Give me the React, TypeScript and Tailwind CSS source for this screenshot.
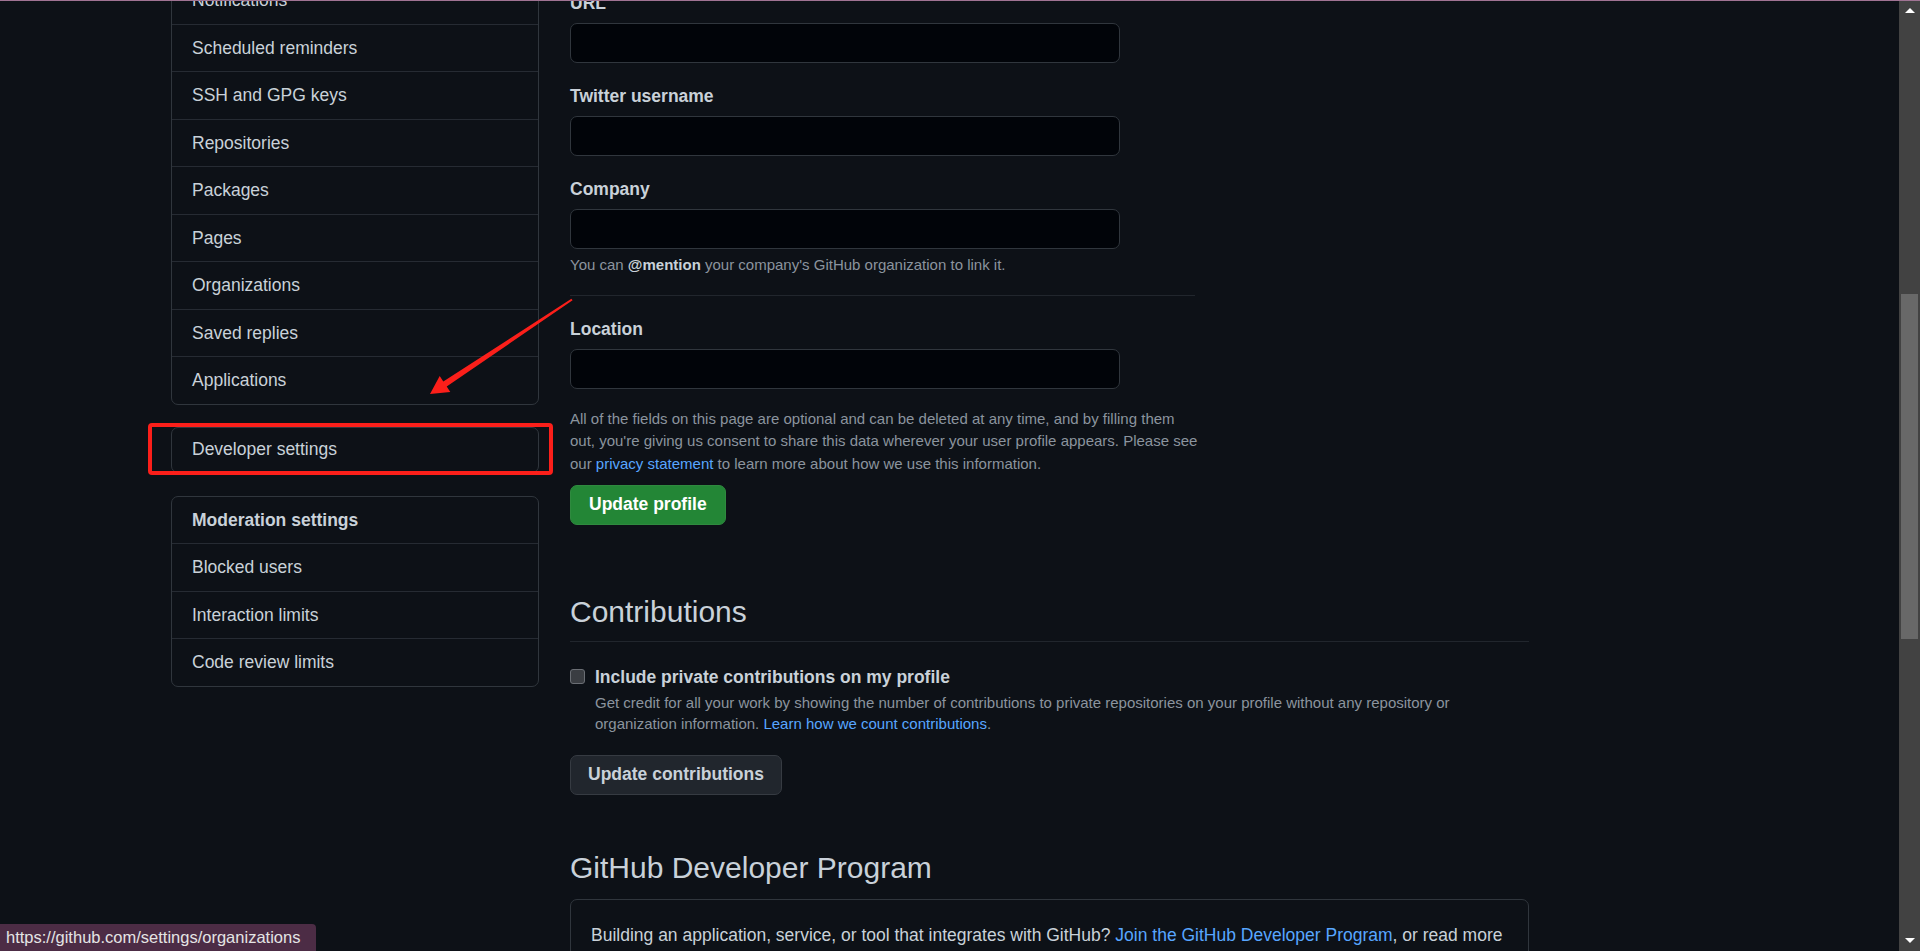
const font = { fontFamily: '"Liberation Sans", Arial, sans-serif' }

const accountItems = [
  'Notifications',
  'Scheduled reminders',
  'SSH and GPG keys',
  'Repositories',
  'Packages',
  'Pages',
  'Organizations',
  'Saved replies',
  'Applications',
]

const moderationItems = ['Blocked users', 'Interaction limits', 'Code review limits']

function MenuRow({ label, last, bold }: { label: string; last?: boolean; bold?: boolean }) {
  return (
    <div
      className={
        'flex items-center px-[20px] text-[17.5px] text-[#c9d1d9] ' +
        (last ? 'h-[46.5px]' : 'h-[47.5px] border-b border-[#262b33]') +
        (bold ? ' font-bold' : '')
      }
    >
      {label}
    </div>
  )
}

function Sidebar() {
  return (
    <aside className="w-[368px] shrink-0 -mt-[24px]">
      <div className="rounded-[7px] border border-[#30363d]">
        {accountItems.map((item, i) => (
          <MenuRow key={item} label={item} last={i === accountItems.length - 1} />
        ))}
      </div>

      <div className="mt-[22px] rounded-[7px] border border-[#30363d]">
        <div className="flex items-center h-[44px] px-[20px] text-[17.5px] text-[#c9d1d9]">Developer settings</div>
      </div>

      <div className="mt-[23px] rounded-[7px] border border-[#30363d]">
        <MenuRow label="Moderation settings" bold />
        {moderationItems.map((item, i) => (
          <MenuRow key={item} label={item} last={i === moderationItems.length - 1} />
        ))}
      </div>
    </aside>
  )
}

function Field({ label, className }: { label: string; className?: string }) {
  return (
    <div className={className}>
      <div className="h-[22px] leading-[22px] text-[17.5px] font-bold text-[#c9d1d9]">{label}</div>
      <div className="mt-[9px] h-[40px] w-[550px] rounded-[7px] border border-[#30363d] bg-[#010409]" />
    </div>
  )
}

function ProfileForm() {
  return (
    <div className="w-[625px]">
      <Field label="URL" />
      <Field label="Twitter username" className="mt-[22px]" />
      <Field label="Company" className="mt-[22px]" />
      <p className="mt-[5px] text-[15px] leading-[22.5px] text-[#8b949e]">
        You can <span className="font-bold text-[#c9d1d9]">@mention</span> your company's GitHub organization to link it.
      </p>
      <div className="mt-[18px] border-t border-[#21262d]" />
      <Field label="Location" className="mt-[22px]" />
      <p className="mt-[19px] whitespace-nowrap text-[15px] leading-[22.5px] text-[#8b949e]">
        All of the fields on this page are optional and can be deleted at any time, and by filling them
        <br />
        out, you're giving us consent to share this data wherever your user profile appears. Please see
        <br />
        our <span className="text-[#58a6ff]">privacy statement</span> to learn more about how we use this information.
      </p>
      <button className="mt-[9.5px] h-[40px] px-[18px] rounded-[7px] border border-[#2f8a3f] bg-[#238636] text-[17.5px] font-bold text-white">
        Update profile
      </button>
    </div>
  )
}

function Contributions() {
  return (
    <section className="mt-[68px]">
      <h2 className="pb-[11px] border-b border-[#21262d] text-[30px] leading-[37.5px] font-normal text-[#c9d1d9]">
        Contributions
      </h2>
      <div className="mt-[24px] flex items-start gap-[10px]">
        <div className="mt-[3px] h-[15px] w-[15px] shrink-0 rounded-[3px] border border-[#6a6e74] bg-[#3a3d42]" />
        <div>
          <div className="h-[22px] leading-[22px] text-[17.5px] font-bold text-[#c9d1d9]">
            Include private contributions on my profile
          </div>
          <p className="mt-[3.5px] whitespace-nowrap text-[15px] leading-[21px] text-[#8b949e]">
            Get credit for all your work by showing the number of contributions to private repositories on your profile without any repository or
            <br />
            organization information. <span className="text-[#58a6ff]">Learn how we count contributions</span>.
          </p>
        </div>
      </div>
      <button className="mt-[21px] h-[40px] px-[17px] rounded-[7px] border border-[#363b42] bg-[#21262d] text-[17.5px] font-bold text-[#c9d1d9]">
        Update contributions
      </button>
    </section>
  )
}

function DeveloperProgram() {
  return (
    <section className="mt-[54px]">
      <h2 className="text-[30px] leading-[37.5px] font-normal text-[#c9d1d9]">GitHub Developer Program</h2>
      <div className="mt-[13px] h-[200px] rounded-[7px] border border-[#30363d] px-[20px] pt-[22px]">
        <p className="whitespace-nowrap text-[17.5px] leading-[26px] text-[#c9d1d9]">
          Building an application, service, or tool that integrates with GitHub?{' '}
          <span className="text-[#58a6ff]">Join the GitHub Developer Program</span>, or read more
        </p>
      </div>
    </section>
  )
}

function Scrollbar() {
  return (
    <div className="w-[21px] shrink-0 flex flex-col bg-[#424242]">
      <div className="h-[21px] flex items-center justify-center">
        <div className="h-0 w-0 border-x-[5px] border-b-[5px] border-x-transparent border-b-white" />
      </div>
      <div className="h-[273px]" />
      <div className="mx-[2px] h-[345px] bg-[#686868]" />
      <div className="flex-1" />
      <div className="h-[21px] flex items-center justify-center">
        <div className="h-0 w-0 border-x-[5px] border-t-[5px] border-x-transparent border-t-white" />
      </div>
    </div>
  )
}

function RedArrow() {
  return (
    <svg className="absolute left-0 top-0 pointer-events-none" width="1920" height="951" viewBox="0 0 1920 951">
      <polygon
        points="571.4,298.7 443.3,381.5 439.7,376.1 430,394 450.3,391.9 446.7,386.5 572.6,300.3"
        fill="#fb1f1a"
      />
    </svg>
  )
}

export default function App() {
  return (
    <div className="relative h-[951px] w-[1920px] overflow-hidden bg-[#0d1117]" style={font}>
      <div className="flex h-full">
        <div className="flex-1 overflow-hidden">
          <div className="flex items-start gap-[31px] pl-[171px]">
            <Sidebar />
            <main className="w-[959px] -mt-[8px]">
              <ProfileForm />
              <Contributions />
              <DeveloperProgram />
            </main>
          </div>
        </div>
        <Scrollbar />
      </div>

      {/* annotations + browser chrome overlays */}
      <div className="absolute left-[148px] top-[423px] h-[52px] w-[405px] rounded-[4px] border-[4px] border-[#fb1f1a]" />
      <RedArrow />
      <div className="absolute inset-x-0 top-0 h-px bg-[#a07393]" />
      <div className="absolute bottom-0 left-0 h-[27px] w-[316px] whitespace-nowrap rounded-tr-[4px] bg-[#4c2c45] px-[6px] text-[16.5px] leading-[27px] text-[#e4e4e4]">
        https://github.com/settings/organizations
      </div>
    </div>
  )
}
